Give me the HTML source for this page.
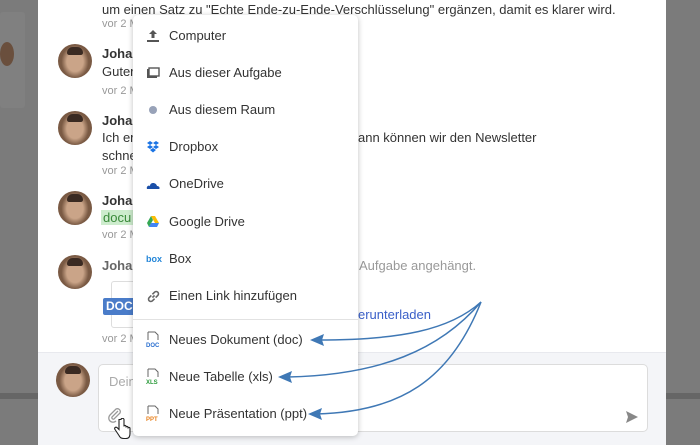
<!DOCTYPE html>
<html><head><meta charset="utf-8"><style>
*{margin:0;padding:0;box-sizing:border-box}
body{width:700px;height:445px;overflow:hidden;position:relative;background:#7b7b7b;font-family:"Liberation Sans",sans-serif;font-size:13px;color:#333}
.abs{position:absolute}
.panel{left:38px;top:0;width:628px;height:445px;background:#fff}
.av{position:absolute;width:34px;height:34px;border-radius:50%;background:radial-gradient(ellipse 40% 48% at 50% 52%,#caa488 0 60%,#7a5a44 100%),#6b4c38;}
.av::before{content:"";position:absolute;left:9px;top:3px;width:16px;height:8px;border-radius:8px 8px 3px 3px;background:#3a2a22}
.name{position:absolute;left:102px;font-weight:bold;color:#333}
.txt{position:absolute;left:102px;color:#333}
.time{position:absolute;left:102px;color:#999;font-size:11px}
.menu{left:133px;top:15px;width:225px;height:421px;background:#fff;border-radius:5px;box-shadow:0 1px 6px rgba(0,0,0,.25)}
.it{position:absolute;left:36px;color:#333;font-size:13px}
.ic{position:absolute;left:13px;width:14px;height:14px}
</style></head><body>
<div class="abs" style="left:0;top:12px;width:25px;height:96px;background:#808080;border-radius:3px"></div>
<div class="abs" style="left:0;top:42px;width:14px;height:24px;border-radius:50%;background:#6a4f3d"></div>
<div class="abs" style="left:0;top:393px;width:38px;height:6px;background:#666"></div>
<div class="abs" style="left:666px;top:393px;width:34px;height:6px;background:#666"></div>
<div class="abs panel"></div>
<div class="txt" style="top:2px">um einen Satz zu "Echte Ende-zu-Ende-Verschlüsselung" ergänzen, damit es klarer wird.</div>
<div class="time" style="top:18px">vor 2 M</div>
<div class="av" style="left:58px;top:44px"></div>
<div class="name" style="top:46px">Johan</div><div class="txt" style="top:64px">Guter</div><div class="time" style="top:85px">vor 2 M</div>
<div class="av" style="left:58px;top:111px"></div>
<div class="name" style="top:113px">Johan</div><div class="txt" style="top:130px">Ich er</div><div class="txt" style="top:148px">schne</div><div class="txt" style="left:358px;top:130px">ann können wir den Newsletter</div><div class="time" style="top:165px">vor 2 M</div>
<div class="av" style="left:58px;top:191px"></div>
<div class="name" style="top:193px">Johan</div><div class="txt" style="top:210px;background:#cdeccd;color:#3a8a3a;padding:0 2px;left:101px">docu</div><div class="time" style="top:229px">vor 2 M</div>
<div class="av" style="left:58px;top:255px"></div>
<div class="name" style="top:258px;color:#666">Johan</div><div class="txt" style="left:359px;top:258px;color:#999">Aufgabe angehängt.</div>
<div class="abs" style="left:111px;top:281px;width:40px;height:47px;border:1px solid #ddd;border-radius:3px"></div>
<div class="abs" style="left:103px;top:298px;width:34px;height:17px;background:#4a7cc9;color:#fff;font-weight:bold;font-size:12px;line-height:17px;padding-left:3px;border-radius:2px">DOC</div>
<div class="txt" style="left:358px;top:307px;color:#3a5fc8">erunterladen</div>
<div class="time" style="top:333px">vor 2 M</div>
<div class="abs" style="left:38px;top:352px;width:628px;height:93px;background:#f4f5f8;border-top:1px solid #e8e9ee"></div>
<div class="av" style="left:56px;top:363px"></div>
<div class="abs" style="left:98px;top:364px;width:550px;height:68px;background:#fff;border:1px solid #dcdcdc;border-radius:5px"></div>
<div class="txt" style="left:109px;top:374px;color:#aaa">Dein</div>
<svg class="abs" style="left:107px;top:407px" width="16" height="16" viewBox="0 0 16 16"><path d="M11 4 L5 10 a1.5 1.5 0 0 0 2 2 L13 6 a3 3 0 0 0-4-4 L3 8 a4 4 0 0 0 6 6" fill="none" stroke="#999" stroke-width="1.3"/></svg>
<svg class="abs" style="left:114px;top:418px" width="18" height="22" viewBox="0 0 18 22"><path d="M5 1.5 v10 l-2-2 c-1.5-1-3 .5-2 2 l4 6 c1 2 2 3 5 3 h2 c3 0 4-2 4-5 v-5 c0-1.5-2-1.5-2 0 v-1 c0-1.5-2-1.5-2 0 v-1 c0-1.5-2-1.5-2 0 v-7 c0-1.5-3-1.5-3 0z" fill="#fff" stroke="#222" stroke-width="1.1"/></svg>
<svg class="abs" style="left:625px;top:410px" width="14" height="14" viewBox="0 0 14 14"><path d="M1 1 L13 7 L1 13 L3 7Z" fill="#888"/></svg>
<div class="abs menu">
<svg class="ic" style="top:14px" viewBox="0 0 14 14"><path d="M7 1 L3 5 H5.5 V9 H8.5 V5 H11Z M1 11 H13 V13 H1Z" fill="#555"/></svg><div class="it" style="top:13px">Computer</div>
<svg class="ic" style="top:51px" viewBox="0 0 14 14"><rect x="1" y="3" width="10" height="9" fill="#555"/><rect x="3" y="2" width="10" height="8" fill="#fff" stroke="#555" stroke-width="1.4"/></svg><div class="it" style="top:50px">Aus dieser Aufgabe</div>
<div class="abs" style="left:16px;top:91px;width:8px;height:8px;border-radius:50%;background:#98a2b8"></div><div class="it" style="top:87px">Aus diesem Raum</div>
<svg class="ic" style="top:125px" viewBox="0 0 14 14"><path d="M4 1 L1 3 L4 5 L1 7 L4 9 L7 7 L10 9 L13 7 L10 5 L13 3 L10 1 L7 3Z M7 7 L4 5 L7 3 L10 5Z M4 10 L7 12.5 L10 10 L7 8Z" fill="#1b74e4"/></svg><div class="it" style="top:124px">Dropbox</div>
<svg class="ic" style="top:163px" viewBox="0 0 14 14"><path d="M1 11 c-1-3 2-4 3-3 c0-4 6-4 7 0 c3 0 3 3 2 3Z" fill="#1a4fa8"/></svg><div class="it" style="top:161px">OneDrive</div>
<svg class="ic" style="top:200px" viewBox="0 0 14 14"><path d="M5 1 H9 L13 8 H9Z" fill="#fbbc04"/><path d="M5 1 L1 8 L3 12 L7 5Z" fill="#34a853"/><path d="M3 12 H11 L13 8 H5Z" fill="#4285f4"/></svg><div class="it" style="top:199px">Google Drive</div>
<div class="abs" style="left:13px;top:239px;font-size:9px;color:#2486d8;font-weight:bold">box</div><div class="it" style="top:236px">Box</div>
<svg class="ic" style="top:274px;width:15px;height:15px" viewBox="0 0 14 14"><path d="M6 8 L8 6 M5 6 L3 8 a2 2 0 0 0 3 3 L8 9 M9 8 L11 6 a2 2 0 0 0-3-3 L6 5" fill="none" stroke="#666" stroke-width="1.5"/></svg><div class="it" style="top:273px">Einen Link hinzufügen</div>
<div class="abs" style="left:0;top:304px;width:225px;height:1px;background:#e2e2e2"></div>
<svg class="ic" style="top:316px;height:18px" viewBox="0 0 14 18"><path d="M2 1 H9 L12 4 V9 M2 1 V9" fill="none" stroke="#666"/><text x="0" y="16" font-size="6" font-weight="bold" fill="#2a6fd0" font-family="Liberation Sans">DOC</text></svg><div class="it" style="top:317px">Neues Dokument (doc)</div>
<svg class="ic" style="top:353px;height:18px" viewBox="0 0 14 18"><path d="M2 1 H9 L12 4 V9 M2 1 V9" fill="none" stroke="#666"/><text x="0" y="16" font-size="6" font-weight="bold" fill="#2a9a3a" font-family="Liberation Sans">XLS</text></svg><div class="it" style="top:354px">Neue Tabelle (xls)</div>
<svg class="ic" style="top:390px;height:18px" viewBox="0 0 14 18"><path d="M2 1 H9 L12 4 V9 M2 1 V9" fill="none" stroke="#666"/><text x="0" y="16" font-size="6" font-weight="bold" fill="#e8821e" font-family="Liberation Sans">PPT</text></svg><div class="it" style="top:391px">Neue Präsentation (ppt)</div>
</div>
<svg class="abs" style="left:0;top:0" width="700" height="445" viewBox="0 0 700 445">
<g fill="none" stroke="#3f78b5" stroke-width="1.5">
<path d="M481 302 C450 330 400 340 318 340"/>
<path d="M481 302 C440 350 380 375 288 377"/>
<path d="M481 302 C450 380 400 412 316 414"/>
</g>
<g fill="#3f78b5"><path d="M310 340 L324 334 L322 340 L324 346Z"/><path d="M278 377 L292 371 L290 377 L292 383Z"/><path d="M308 414 L322 408 L320 414 L322 420Z"/></g>
</svg>
</body></html>
